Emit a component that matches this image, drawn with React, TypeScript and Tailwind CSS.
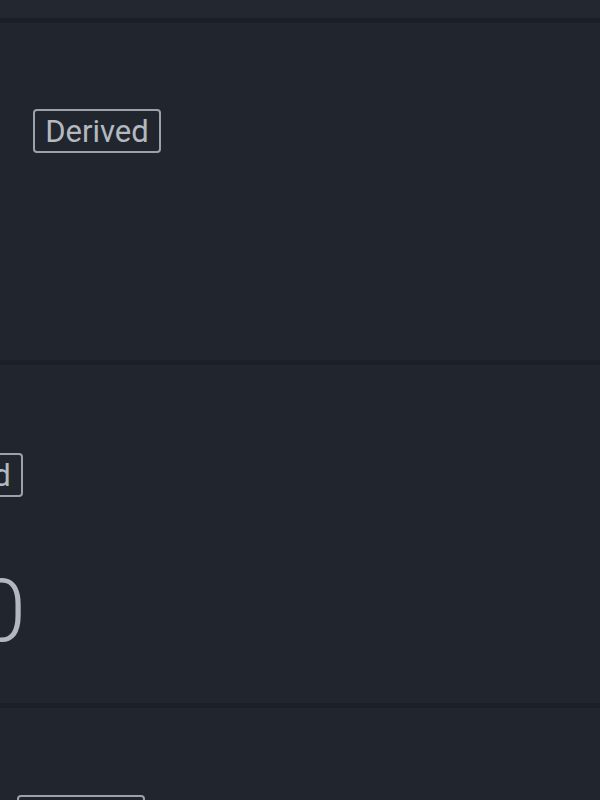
import React from "react";

function Badge({ className = "" }: { className?: string }) {
  return (
    <div
      className={
        "inline-flex h-[44px] w-[128px] items-center justify-center rounded-[4px] border-2 border-[#9ca2a9] text-[31px] leading-none text-[#b4b9c0] " +
        className
      }
      style={{ fontFamily: "Roboto, 'Noto Sans', sans-serif" }}
    >
      Derived
    </div>
  );
}

function Divider() {
  return <div className="h-[5px] w-full shrink-0 bg-[#1b1f26]" />;
}

export default function App() {
  return (
    <div className="flex h-[800px] w-[600px] flex-col overflow-hidden bg-[#21262e]">
      <div className="h-[18px] shrink-0 bg-[#222730]" />
      <Divider />
      <div className="h-[337px] shrink-0 pl-[33px] pt-[86px]">
        <Badge />
      </div>
      <Divider />
      <div className="relative h-[338px] shrink-0 pt-[88px]">
        <div className="ml-[-105px]">
          <Badge />
        </div>
        <div
          className="ml-[-23px] mt-[70px] text-[88px] font-light leading-none text-[#b3b8bf]"
          style={{ fontFamily: "Roboto, 'Noto Sans', sans-serif" }}
        >
          0
        </div>
      </div>
      <Divider />
      <div className="shrink-0 pl-[17px] pt-[87px]">
        <Badge />
      </div>
    </div>
  );
}
